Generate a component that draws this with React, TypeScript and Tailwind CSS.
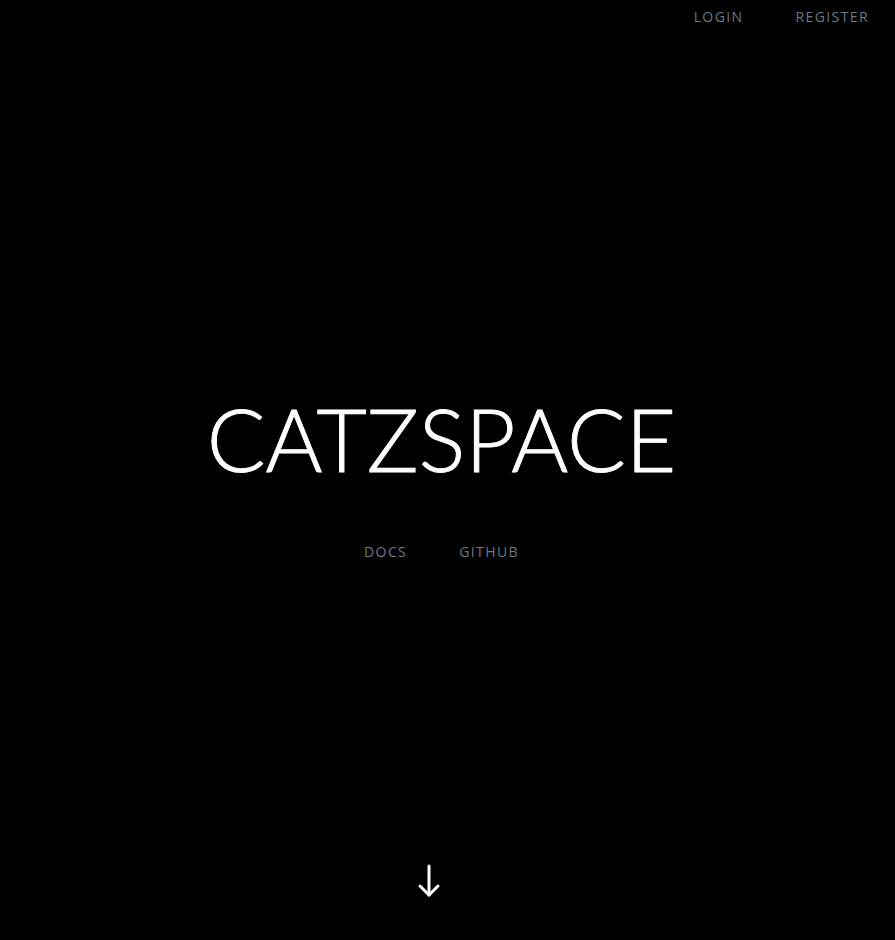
function NavLink(props: { label: string; href: string }) {
    const { label, href } = props
    return (
        <a href={href} className="px-[26px] text-[14px] tracking-[0.1em] text-[#6b7a88] hover:text-white">
            {label}
        </a>
    )
}

export default function App() {
    return (
        <div className="flex h-[940px] flex-col bg-black font-['Open_Sans',sans-serif]">
            <header className="flex h-[32px] items-center justify-end">
                <NavLink label="LOGIN" href="#login" />
                <NavLink label="REGISTER" href="#register" />
            </header>

            <main className="flex flex-1 flex-col items-center pr-3 pt-[363px]">
                <h1 className="font-['Lato',sans-serif] text-[87px] font-light leading-none tracking-[0em] text-white [-webkit-text-stroke:0.9px_white]">
                    CATZSPACE
                </h1>
                <nav className="mt-[59px] flex">
                    <NavLink label="DOCS" href="#docs" />
                    <NavLink label="GITHUB" href="#github" />
                </nav>
            </main>

            <div className="flex justify-center pb-[42px] pr-[37px]">
                {/* scroll hint */}
                <svg width="24" height="34" viewBox="0 0 24 34" fill="none" stroke="white" strokeWidth="3" strokeLinecap="round" strokeLinejoin="round">
                    <path d="M12 2v29" />
                    <path d="M3 22l9 9 9-9" />
                </svg>
            </div>
        </div>
    )
}
